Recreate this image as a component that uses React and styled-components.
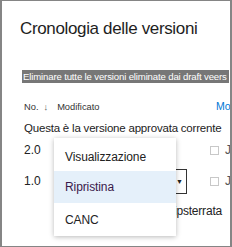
import React from 'react';
import styled, { createGlobalStyle } from 'styled-components';

const Global = createGlobalStyle`
  body {
    margin: 0;
    background: #ffffff;
    font-family: 'Liberation Sans', Arial, sans-serif;
  }
`;

const Frame = styled.div`
  position: relative;
  box-sizing: border-box;
  width: 232px;
  height: 247px;
  overflow: hidden;
  border: 1px solid #858585;
  border-left-width: 2px;
  border-right-width: 2px;
  background: #fff;
  color: #222;
`;

const Title = styled.h1`
  margin: 17px 0 0 18px;
  font-size: 17px;
  font-weight: 400;
  line-height: 22px;
  letter-spacing: -0.35px;
  color: #1e1e1e;
  white-space: nowrap;
`;

const Banner = styled.div`
  margin: 30px 1px 0 20px;
  height: 13px;
  background: #777777;
  color: #ffffff;
  font-size: 9.6px;
  line-height: 13px;
  letter-spacing: -0.15px;
  padding-left: 1px;
  white-space: nowrap;
  overflow: hidden;
`;

const HeaderRow = styled.div`
  display: grid;
  grid-template-columns: 192px auto;
  align-items: baseline;
  margin: 17px 0 0 22px;
  height: 12px;
  font-size: 9.3px;
  color: #333;
  white-space: nowrap;
`;

const SortArrow = styled.span`
  margin: 0 9px 0 5px;
  color: #555;
`;

const ModLink = styled.span`
  font-size: 10.5px;
  color: #0078d4;
`;

const Notice = styled.div`
  margin: 9px 0 0 22px;
  font-size: 11.5px;
  line-height: 15px;
  letter-spacing: -0.2px;
  white-space: nowrap;
`;

const VersionRow = styled.div`
  display: flex;
  align-items: center;
  height: ${p => p.$h}px;
  margin-left: 22px;
  font-size: 12px;
  white-space: nowrap;
`;

const VersionNo = styled.span`
  width: 32px;
  flex: none;
`;

const Select = styled.div`
  flex: none;
  box-sizing: border-box;
  width: 131px;
  height: 25px;
  border: 1px solid #333;
  display: flex;
  align-items: center;
  justify-content: flex-end;
  padding-right: 3px;
  font-size: 7px;
`;

const Spacer = styled.span`
  flex: none;
  width: ${p => p.$w}px;
`;

const Check = styled.span`
  flex: none;
  box-sizing: border-box;
  width: 9px;
  height: 9px;
  border: 1px solid #c8c8c8;
  margin-right: 6px;
`;

const Clip = styled.span`
  color: #555;
`;

const Comment = styled.div`
  margin: 6px 0 0 0;
  padding-right: 8px;
  text-align: right;
  font-size: 12px;
  line-height: 15px;
  letter-spacing: -0.2px;
  white-space: nowrap;
`;

const Menu = styled.ul`
  position: absolute;
  left: 52px;
  top: 137px;
  width: 122px;
  margin: 0;
  padding: 4px 0 0;
  list-style: none;
  background: #fff;
  box-shadow: 0 1px 5px rgba(0, 0, 0, 0.28);
`;

const MenuItem = styled.li`
  height: ${p => p.$h}px;
  display: flex;
  align-items: center;
  padding-left: 11px;
  font-size: 12px;
  letter-spacing: -0.1px;
  color: ${p => (p.$active ? '#3a1a4a' : '#222')};
  background: ${p => (p.$active ? '#e5f0fa' : '#fff')};
`;

export default function App() {
  return (
    <>
      <Global />
      <Frame>
        <Title>Cronologia delle versioni</Title>
        <Banner>Eliminare tutte le versioni eliminate dai draft veers</Banner>
        <HeaderRow>
          <span>
            No.<SortArrow>↓</SortArrow>Modificato
          </span>
          <ModLink>Mod</ModLink>
        </HeaderRow>
        <Notice>Questa è la versione approvata corrente</Notice>
        <VersionRow $h={28}>
          <VersionNo>2.0</VersionNo>
          <Spacer $w={154} />
          <Check />
          <Clip>Ja</Clip>
        </VersionRow>
        <VersionRow $h={34}>
          <VersionNo>1.0</VersionNo>
          <Select>▼</Select>
          <Spacer $w={23} />
          <Check />
          <Clip>Ja</Clip>
        </VersionRow>
        <Comment>Versione ripsterrata</Comment>
        <Menu>
          <MenuItem $h={29}>Visualizzazione</MenuItem>
          <MenuItem $h={32} $active>Ripristina</MenuItem>
          <MenuItem $h={33}>CANC</MenuItem>
        </Menu>
      </Frame>
    </>
  );
}
